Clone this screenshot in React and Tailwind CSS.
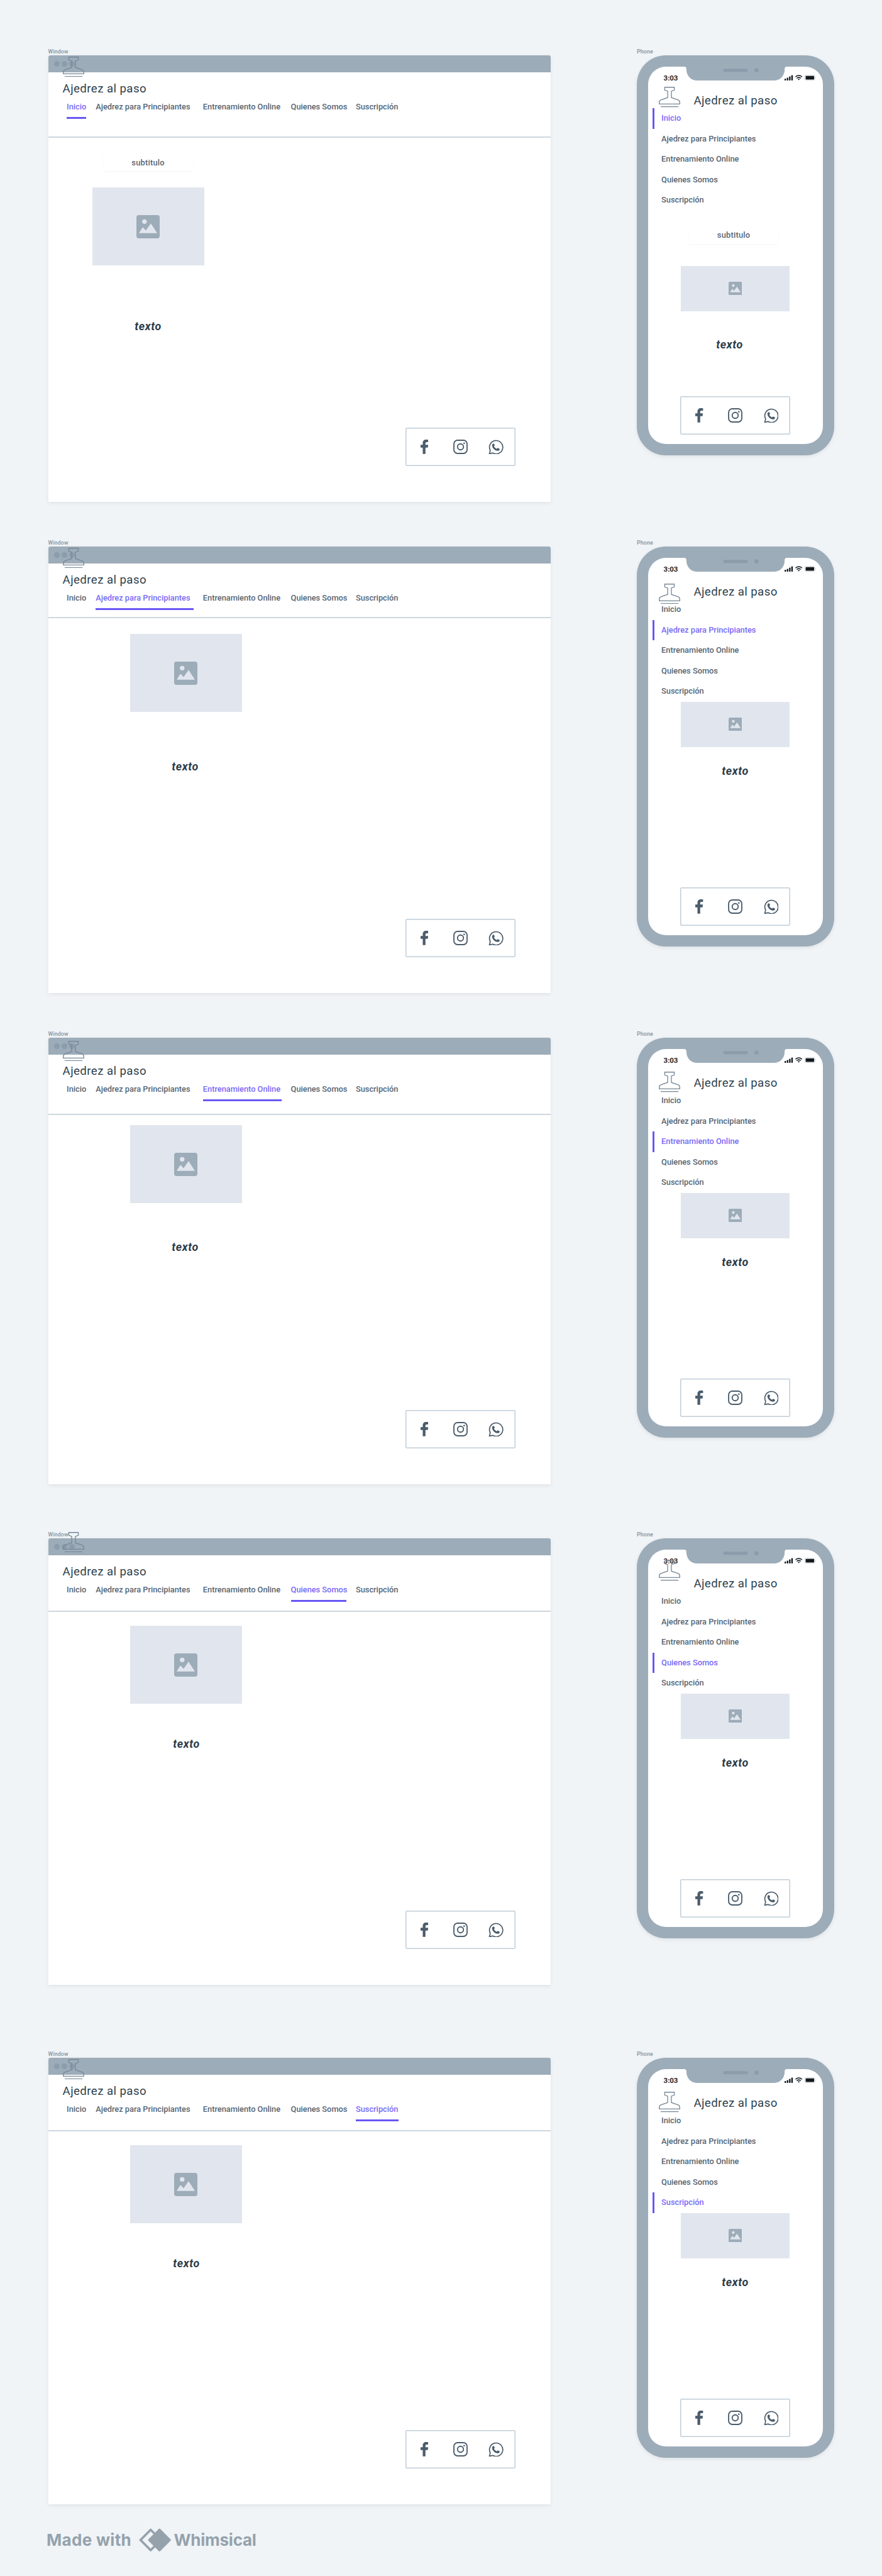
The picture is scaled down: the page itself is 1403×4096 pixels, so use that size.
const NAV = [
  { label: 'Inicio', width: 'w-[31.3px]' },
  { label: 'Ajedrez para Principiantes', width: 'w-[155.8px]' },
  { label: 'Entrenamiento Online', width: 'w-[125px]' },
  { label: 'Quienes Somos', width: 'w-[88.6px]' },
  { label: 'Suscripción', width: 'w-[67.6px]' },
];

const SCREENS = [
  {
    active: 0,
    subtitle: true,
    section: 'mt-[72px]',
    header: 'h-[104px]',
    winLogo: 'top-[1.5px]',
    winBody: 'pl-[70px] pt-[26px]',
    winText: 'mt-[87px]',
    phoneLogo: 'top-[50px]',
    phoneText: 'mt-[43.5px] pr-[18px]',
  },
  {
    active: 1,
    section: 'mt-[55px]',
    header: 'h-[87px]',
    winLogo: 'top-[1.5px]',
    winBody: 'pl-[130px] pt-[25px]',
    winText: 'mt-[77px] pr-[2px]',
    phoneLogo: 'top-[58.5px]',
    phoneText: 'mt-[28px]',
  },
  {
    active: 2,
    section: 'mt-[55px]',
    header: 'h-[96px]',
    winLogo: 'top-[4.5px]',
    winBody: 'pl-[130px] pt-[16px]',
    winText: 'mt-[60px] pr-[2px]',
    phoneLogo: 'top-[54px]',
    phoneText: 'mt-[28px]',
  },
  {
    active: 3,
    section: 'mt-[70px]',
    header: 'h-[90px]',
    winLogo: 'top-[-10.5px]',
    winBody: 'pl-[130px] pt-[22px]',
    winText: 'mt-[54px] pl-[2px]',
    phoneLogo: 'top-[35px]',
    phoneText: 'mt-[28px]',
  },
  {
    active: 4,
    section: 'mt-[100px]',
    header: 'h-[90px]',
    winLogo: 'top-[1.5px]',
    winBody: 'pl-[130px] pt-[22px]',
    winText: 'mt-[54px] pl-[2px]',
    phoneLogo: 'top-[54px]',
    phoneText: 'mt-[28px]',
  },
];

function PawnLogo({ className }) {
  return (
    <svg
      viewBox="0 0 46 44"
      className={`absolute h-[32.5px] w-[34px] ${className}`}
      fill="none"
      stroke="#778898"
      strokeWidth="1.8"
    >
      <path d="M12.700 1h20.600v6.300L27 9.400v13.900l14.500 5Q45 29.800 45 33v4H1v-4q0-3.200 3.500-4.700l14.500-5V9.400l-6.300-2.100z" />
      <path d="M4 42.800h38.300" />
    </svg>
  );
}

function ImageBlock({ className, iconClass }) {
  return (
    <div className={`flex shrink-0 items-center justify-center bg-[#e1e5ed] ${className}`}>
      <svg viewBox="0 0 50 50" className={iconClass}>
        <rect width="50" height="50" rx="5" fill="#9dacb9" />
        <circle cx="17.3" cy="14" r="5" fill="#e1e5ed" />
        <path d="M5.500 39l8-13 6.800 7L31 18l13.700 21z" fill="#e1e5ed" />
      </svg>
    </div>
  );
}

function SocialBox({ className }) {
  return (
    <div
      className={`flex h-[61px] w-[175px] shrink-0 items-center rounded-[2px] border border-[#c0cdd8] bg-white shadow-[inset_0_0_0_0.5px_#c0cdd8] ${className}`}
    >
      <svg viewBox="0 0 17 31" className="ml-[23px] h-[23px] w-[12.6px]" fill="#4b5c6b">
        <path d="M16.700.3v5.200H13.200c-2 0-2.700 1-2.700 2.600V11h6l-1 6.100h-5v13.500H4.700V17.100H0V11h4.700V7.300C4.700 2.700 7.500.1 12 .1c1.800 0 3.500.1 4.700.2z" />
      </svg>
      <svg
        viewBox="0 0 31 31"
        className="ml-[39.5px] h-[23px] w-[23px]"
        fill="none"
        stroke="#4b5c6b"
        strokeWidth="2.5"
      >
        <rect x="1.4" y="1.4" width="28.2" height="28.2" rx="7.8" />
        <circle cx="15.5" cy="15.5" r="6.4" />
        <circle cx="23.3" cy="7.8" r="1.8" fill="#4b5c6b" stroke="none" />
      </svg>
      <svg viewBox="0 0 32 32" className="ml-[33.5px] h-[23.7px] w-[23.7px]">
        <path
          d="M1.900 30.600l2-7.500A14.300 14.300 0 1 1 9.300 28.700z"
          fill="none"
          stroke="#4b5c6b"
          strokeWidth="2.3"
        />
        <path
          d="M10 8.800c-1.500.6-2.500 2.200-2.200 4.400.7 5 5 9.400 9.800 10.600 2.400.6 5.200.1 6.100-1.600.6-1.200.4-2.200-.1-2.500l-3.100-1.500c-.6-.3-1.100-.1-1.500.4l-1.100 1.400c-2.700-.9-5-3.100-6-5.700l1.200-1.400c.4-.5.4-.9.2-1.400l-1.300-2.500c-.3-.6-1-.5-2-.2z"
          fill="#4b5c6b"
        />
      </svg>
    </div>
  );
}

function Subtitle({ className }) {
  return (
    <div
      className={`flex h-[27px] w-[142px] shrink-0 items-center justify-center rounded-[3px] bg-white text-[12.8px] leading-[16px] font-medium tracking-[0.25px] text-[#566573] shadow-[0_1px_3px_rgba(0,0,0,0.04)] ${className}`}
    >
      subtitulo
    </div>
  );
}

function BodyText({ className }) {
  return (
    <p
      className={`text-center text-[17.8px] leading-[20px] font-bold tracking-[0.7px] text-[#2b3b48] italic ${className}`}
    >
      texto
    </p>
  );
}

function FrameLabel({ children }) {
  return (
    <div className="h-[16px] text-[8.8px] leading-[20px] font-medium tracking-[0.1px] text-[#8494a2]">
      {children}
    </div>
  );
}

function BrowserWindow({ screen }) {
  return (
    <div>
      <FrameLabel>Window</FrameLabel>
      <div className="relative flex h-[710px] w-[799px] flex-col rounded-t-[3px] bg-white shadow-[0_2px_6px_rgba(0,0,0,0.07)]">
        <div className="flex h-[27px] shrink-0 items-center gap-[3px] rounded-t-[3px] bg-[#9dacb9] pl-[9px]">
          <span className="size-[9px] rounded-full bg-[#8c9cab]" />
          <span className="size-[9px] rounded-full bg-[#8c9cab]" />
          <span className="size-[9px] rounded-full bg-[#8c9cab]" />
        </div>
        <PawnLogo className={`left-[23px] ${screen.winLogo}`} />
        <header className={`shrink-0 border-b-2 border-[#cdd7e0] ${screen.header}`}>
          <h1 className="pt-[14px] pl-[23px] text-[18.7px] leading-[24px] tracking-[0.4px] text-[#2f3f4c]">
            Ajedrez al paso
          </h1>
          <nav className="mt-[8px] flex gap-[14.8px] pl-[29.5px]">
            {NAV.map((item, i) => (
              <a
                key={item.label}
                className={`flex h-[28px] flex-col justify-between text-[12.8px] leading-[17px] font-medium whitespace-nowrap ${item.width} ${
                  i === screen.active ? 'text-[#7869f8]' : 'text-[#566573]'
                }`}
              >
                {item.label}
                {i === screen.active && <span className="h-[3px] w-full bg-[#6857f5]" />}
              </a>
            ))}
          </nav>
        </header>
        <main className={`flex grow flex-col ${screen.winBody}`}>
          <div className="flex w-[178px] flex-col">
            {screen.subtitle && <Subtitle className="mb-[26px] self-center" />}
            <ImageBlock className="h-[124px] w-[178px]" iconClass="size-[37px]" />
            <BodyText className={screen.winText} />
          </div>
          <SocialBox className="mt-auto mr-[56px] mb-[57px] self-end" />
        </main>
      </div>
    </div>
  );
}

function StatusBar() {
  return (
    <div className="flex h-[42px] shrink-0 items-start justify-between pt-[10.5px] pr-[11.5px] pl-[24.5px]">
      <span className="text-[11.4px] leading-[14px] font-bold text-[#1c242b]">3:03</span>
      <svg viewBox="0 0 67 12" className="mt-[2px] h-[9px] w-[50px]" fill="#121a20">
        <rect x="0" y="8" width="3.2" height="4" rx="1" />
        <rect x="4.8" y="6" width="3.2" height="6" rx="1" />
        <rect x="9.6" y="3.4" width="3.2" height="8.6" rx="1" />
        <rect x="14.4" y="0.8" width="3.2" height="11.2" rx="1" />
        <g fill="none" stroke="#121a20" strokeWidth="2">
          <path d="M23.300 4.400q7-6 14 0" />
          <path d="M25.900 7.300q4.400-3.600 8.800 0" />
        </g>
        <path d="M28.100 9.200q2.200-1.600 4.400 0L30.300 11.500z" />
        <rect x="43.5" y="0.9" width="21" height="10.7" rx="2.5" fill="none" stroke="#c9c9cc" strokeWidth="1.2" />
        <rect x="45" y="2.4" width="18" height="7.700" rx="1" />
        <path d="M65.700 4.500q2 1.700 0 3.400z" fill="#c9c9cc" />
      </svg>
    </div>
  );
}

function Notch() {
  return (
    <svg viewBox="0 0 220 31" className="absolute top-[17px] left-1/2 h-[23px] w-[163px] -translate-x-1/2">
      <path
        d="M0 0h220v1.300q-4.500 0-4.500 5C215.500 21 206 31 192 31H28C14 31 4.500 21 4.500 6.300q0-5-4.500-5z"
        fill="#9dacb9"
      />
      <rect x="83.5" y="5.6" width="53" height="7" rx="3.5" fill="#8c9cab" />
      <circle cx="155" cy="9" r="4.6" fill="#8c9cab" />
    </svg>
  );
}

function Phone({ screen }) {
  return (
    <div>
      <FrameLabel>Phone</FrameLabel>
      <div className="relative h-[636px] w-[314px] rounded-[46px] bg-[#9dacb9] p-[18px] shadow-[0_2px_6px_rgba(0,0,0,0.08)]">
        <Notch />
        <div className="flex h-full flex-col rounded-[28px] bg-white">
          <StatusBar />
          <h1 className="text-center text-[18.7px] leading-[24px] tracking-[0.4px] text-[#2f3f4c]">
            Ajedrez al paso
          </h1>
          <nav>
            {NAV.map((item, i) => (
              <a
                key={item.label}
                className={`ml-[6.5px] flex h-[32.5px] items-center border-l-3 pl-[11.5px] text-[12.8px] leading-[16px] font-medium ${
                  i === screen.active ? 'border-[#6857f5] text-[#7869f8]' : 'border-transparent text-[#566573]'
                }`}
              >
                {item.label}
              </a>
            ))}
          </nav>
          <div className="ml-[52px] flex w-[173px] flex-col">
            {screen.subtitle && <Subtitle className="mt-[26px] mb-[35px] ml-[13px]" />}
            <ImageBlock className="h-[72px] w-[173px]" iconClass="size-[21.5px]" />
            <BodyText className={screen.phoneText} />
          </div>
          <SocialBox className="mt-auto mb-[15px] ml-[51px]" />
        </div>
        <PawnLogo className={`left-[34.5px] ${screen.phoneLogo}`} />
      </div>
    </div>
  );
}

function WhimsicalMark() {
  return (
    <svg
      viewBox="0 0 69.5 50.7"
      className="ml-[12px] h-[37.5px] w-[51.5px] shrink-0"
      stroke="#95a2ac"
      strokeWidth="5"
      strokeLinejoin="round"
    >
      <path d="M25.200 3.300L3.300 25.350l21.900 22.050 21.900-22.050z" fill="none" />
      <path d="M44.200 3.300L22.300 25.350l21.900 22.050 21.900-22.050z" fill="#95a2ac" />
    </svg>
  );
}

export default function App() {
  return (
    <div className="flex min-h-[4096px] w-[1403px] flex-col overflow-hidden bg-[#f0f4f7] pl-[76.6px] font-['Roboto',sans-serif]">
      {SCREENS.map((screen) => (
        <section key={screen.active} className={`flex gap-[137.5px] ${screen.section}`}>
          <BrowserWindow screen={screen} />
          <Phone screen={screen} />
        </section>
      ))}
      <footer className="mt-[38px] -ml-[2.5px] flex items-center font-['Inter',sans-serif] text-[26px] leading-[38px] font-bold text-[#95a2ac]">
        <span className="w-[135px] tracking-[0.3px] whitespace-nowrap">Made with</span>
        <WhimsicalMark />
        <span className="ml-[4px] tracking-[-0.25px] whitespace-nowrap">Whimsical</span>
      </footer>
    </div>
  );
}
